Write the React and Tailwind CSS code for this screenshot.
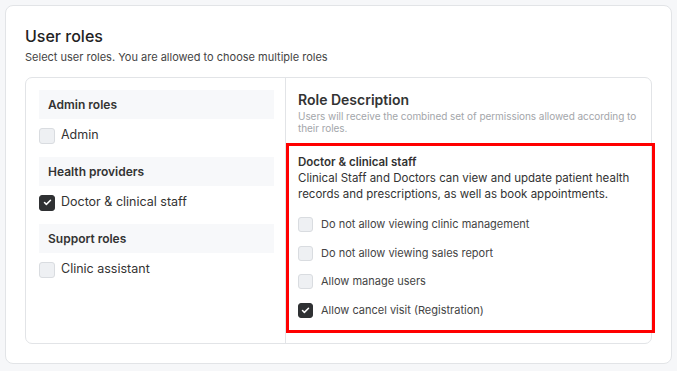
import { Check } from "lucide-react";

function Box({ checked, size = "w-4 h-4" }) {
  return (
    <span
      className={`${size} shrink-0 rounded-[3px] flex items-center justify-center ${
        checked ? "bg-[#2f3133] border border-[#2f3133]" : "bg-[#eef0f3] border border-[#d9dce0]"
      }`}
    >
      {checked && <Check size={9} strokeWidth={4} className="text-white" />}
    </span>
  );
}

function App() {
  const groups = [
    { title: "Admin roles", items: [{ label: "Admin", checked: false }] },
    { title: "Health providers", items: [{ label: "Doctor & clinical staff", checked: true }] },
    { title: "Support roles", items: [{ label: "Clinic assistant", checked: false }] },
  ];

  const perms = [
    { label: "Do not allow viewing clinic management", checked: false },
    { label: "Do not allow viewing sales report", checked: false },
    { label: "Allow manage users", checked: false },
    { label: "Allow cancel visit (Registration)", checked: true },
  ];

  return (
    <div className="w-[677px] h-[371px] bg-[#f6f7f9] p-[5px] font-['Inter',sans-serif] text-[#333]">
      <div className="h-[359px] bg-white border border-[#e2e4e7] rounded-lg px-[19px] pt-[20px]">
        <h2 className="text-[16px] leading-[20px] font-medium text-[#222]">User roles</h2>
        <p className="text-[11px] leading-[16px] mt-[3px] text-[#444]">
          Select user roles. You are allowed to choose multiple roles
        </p>

        {/* roles card */}
        <div className="mt-[12px] h-[267px] border border-[#e2e4e7] rounded-[7px] flex">
          <div className="w-[260px] border-r border-[#e2e4e7] pl-[13px] pr-[11px] pt-[12px]">
            {groups.map((g, i) => (
              <div key={i} className={i > 0 ? "mt-[8px]" : ""}>
                <div className="h-[29px] bg-[#f7f8fa] px-[9px] flex items-center text-[12px] font-semibold text-[#333]">
                  {g.title}
                </div>
                {g.items.map((it, j) => (
                  <div key={j} className="h-[30px] pt-[3px] flex items-center gap-[6px] text-[12.5px] text-[#333]">
                    <Box checked={it.checked} />
                    {it.label}
                  </div>
                ))}
              </div>
            ))}
          </div>

          <div className="flex-1 pt-[13px]">
            <div className="px-[12px]">
              <h3 className="text-[14px] leading-[18px] font-semibold text-[#333]">Role Description</h3>
              <p className="text-[10px] leading-[12px] mt-[1px] tracking-[-0.05px] text-[#a3a6aa]">
                Users will receive the combined set of permissions allowed according to their roles.
              </p>
            </div>

            {/* highlighted role */}
            <div className="mt-[9px] mr-[-4px] border-[3px] border-[#ff0000] pl-[9px] pt-[8px] pb-[5px]">
              <div className="text-[11.5px] leading-[16px] font-semibold text-[#333]">Doctor &amp; clinical staff</div>
              <p className="text-[11.5px] leading-[16px] text-[#333] pr-[20px]">
                Clinical Staff and Doctors can view and update patient health records and prescriptions, as well as book appointments.
              </p>
              <div className="mt-[8px] flex flex-col">
                {perms.map((p, i) => (
                  <div key={i} className="h-[28.7px] flex items-center gap-[8px] text-[11px] text-[#444]">
                    <Box checked={p.checked} size="w-[15px] h-[15px]" />
                    {p.label}
                  </div>
                ))}
              </div>
            </div>
          </div>
        </div>
      </div>
    </div>
  );
}

export default App;
